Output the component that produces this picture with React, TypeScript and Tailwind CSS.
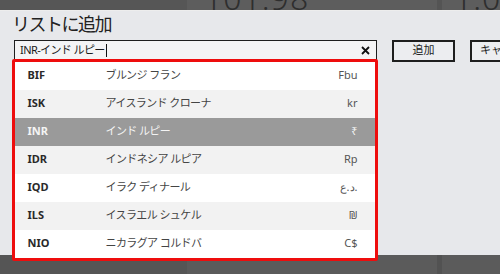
import React from "react";

const rows = [
  { code: "BIF", name: "ブルンジ フラン", sym: "Fbu" },
  { code: "ISK", name: "アイスランド クローナ", sym: "kr" },
  { code: "INR", name: "インド ルピー", sym: "₹", selected: true },
  { code: "IDR", name: "インドネシア ルピア", sym: "Rp" },
  { code: "IQD", name: "イラク ディナール", sym: "د.ع." },
  { code: "ILS", name: "イスラエル シュケル", sym: "₪" },
  { code: "NIO", name: "ニカラグア コルドバ", sym: "C$" },
];

const jp = { fontFamily: '"Noto Sans", "Noto Sans CJK JP", sans-serif' };

export default function App() {
  return (
    <div className="w-[500px] h-[274px] flex flex-col overflow-hidden bg-[#575757]" style={jp}>
      {/* top dark strip */}
      <div className="h-[10px] flex overflow-hidden shrink-0">
        <div className="w-[187px] bg-[#565656]" />
        <div className="w-[250px] bg-[#5d5d5d] overflow-hidden pl-[17px]">
          <span className="text-[32px] leading-none font-light text-[#2e2e2e] -mt-[18px] block tracking-[1px]">101.98</span>
        </div>
        <div className="w-[5px] bg-[#545454]" />
        <div className="flex-1 bg-[#5d5d5d] overflow-hidden pl-[12px]">
          <span className="text-[32px] leading-none font-light text-[#2e2e2e] -mt-[18px] block tracking-[1px]">1.07</span>
        </div>
      </div>

      {/* dialog */}
      <div className="relative h-[245px] shrink-0 bg-[#e7e8eb] border-t border-[#ededed] pl-[12px]">
        <div className="text-[18px] leading-[22px] text-[#222] tracking-[-1.5px] mt-[2px] h-[27px]">リストに追加</div>
        <div className="flex items-start gap-[15px] pl-[2px]">
          <div className="relative shrink-0 w-[363px] h-[21px] border-[1.5px] border-[#1e1e1e] bg-[#f4f4f5] flex items-center pl-[5px] pr-[6px]">
            <span className="text-[11px] text-[#1a1a1a] tracking-[-0.6px]">INR-インド ルピー</span>
            <span className="w-px h-[13px] bg-[#111] ml-[1px]" />
            <span className="ml-auto text-[#111]">
              <svg width="9" height="9" viewBox="0 0 9 9">
                <path d="M1 1 L8 8 M8 1 L1 8" stroke="#111" strokeWidth="1.8" />
              </svg>
            </span>
            {/* dropdown */}
            <div className="absolute left-[-3.5px] top-[17.5px] w-[366px] border-[3px] border-[#ee0d0d] rounded-[2px] bg-white z-10 flex flex-col">
              {rows.map((r, i) => (
                <div
                  key={r.code}
                  className={`h-[28px] flex items-center pl-[13px] pr-[17px] ${
                    r.selected ? "bg-[#9a9a9a] text-white" : i % 2 === 1 ? "bg-[#f2f2f2]" : "bg-white"
                  }`}
                >
                  <span className={`w-[78px] text-[11px] font-bold ${r.selected ? "text-[#f4f4f4]" : "text-[#2a2a2a]"}`}>{r.code}</span>
                  <span className={`text-[11px] tracking-[-0.6px] ${r.selected ? "text-[#f4f4f4]" : "text-[#444]"}`}>{r.name}</span>
                  <span className={`ml-auto text-[11px] ${r.selected ? "text-[#f4f4f4]" : "text-[#555]"}`}>{r.sym}</span>
                </div>
              ))}
            </div>
          </div>
          <div className="shrink-0 w-[63px] h-[22px] border-2 border-[#1e1e1e] bg-[#ecedf0] flex items-center justify-center text-[11px] text-[#222] -mt-[0.5px]">
            追加
          </div>
          <div className="shrink-0 w-[80px] h-[22px] border-2 border-[#1e1e1e] bg-[#ecedf0] flex items-center pl-[8px] text-[11px] text-[#222] -mt-[0.5px] whitespace-nowrap">
            キャンセル
          </div>
        </div>
      </div>

      {/* bottom dark strip */}
      <div className="flex-1 flex">
        <div className="w-[187px] bg-[#555555]" />
        <div className="w-[250px] bg-[#5b5b5b]" />
        <div className="w-[5px] bg-[#525252]" />
        <div className="flex-1 bg-[#5b5b5b]" />
      </div>
    </div>
  );
}
